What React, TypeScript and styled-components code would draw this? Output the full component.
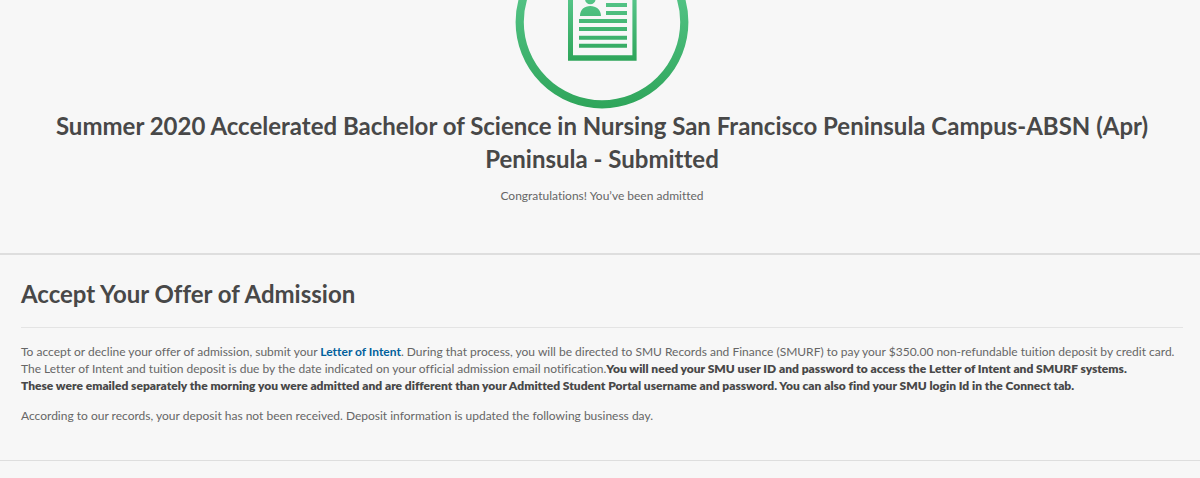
import React from "react";
import styled, { createGlobalStyle } from "styled-components";

const GlobalStyle = createGlobalStyle`
  body {
    margin: 0;
    background: #f7f7f7;
    color: #666666;
    font-family: Lato, "Liberation Sans", sans-serif;
    font-size: 12px;
    font-variant-ligatures: none;
    line-height: 17px;
  }
`;

const Hero = styled.header`
  display: flex;
  flex-direction: column;
  align-items: center;
  padding: 0 17px 49px 21px;
  border-bottom: 2px solid #dedede;
  text-align: center;
`;

const Badge = styled.svg`
  display: block;
  width: 174px;
  height: 109px;
`;

const Title = styled.h1`
  margin: 0;
  color: #484848;
  font-size: 24px;
  font-weight: 700;
  line-height: 33px;
`;

const Status = styled.p`
  margin: 12px 0 0;
`;

const Offer = styled.section`
  padding: 22px 17px 36px 21px;
  border-bottom: 1px solid #dedede;
`;

const SectionTitle = styled.h2`
  margin: 0 0 15px;
  padding-bottom: 17px;
  border-bottom: 1px solid #e4e4e4;
  color: #484848;
  font-size: 24px;
  font-weight: 700;
  line-height: 33px;
`;

const Paragraph = styled.p`
  margin: 0 0 13px;

  &:last-child {
    margin-bottom: 0;
  }
`;

const Strong = styled.strong`
  color: #484848;
  font-weight: 800;
`;

const TextLink = styled.a`
  color: #00609c;
  font-weight: 700;
  text-decoration: none;
`;

function ApplicationBadge() {
  return (
    <Badge viewBox="0 0 174 109" aria-hidden="true">
      <defs>
        <linearGradient id="ring" gradientUnits="userSpaceOnUse" x1="0" y1="-65" x2="0" y2="109">
          <stop offset="0" stopColor="#66d29b" />
          <stop offset="1" stopColor="#2ea55a" />
        </linearGradient>
        <linearGradient id="sheet" gradientUnits="userSpaceOnUse" x1="0" y1="-27" x2="0" y2="61">
          <stop offset="0" stopColor="#66d29b" />
          <stop offset="1" stopColor="#2ea55a" />
        </linearGradient>
      </defs>
      <circle cx="87" cy="22" r="82.3" fill="none" stroke="url(#ring)" strokeWidth="8.2" />
      <path
        fill="url(#sheet)"
        fillRule="evenodd"
        d="M53-27H121.6V60.7H53ZM58-22V55.3H117.4V-22Z"
      />
      <circle cx="75.3" cy="-1" r="5.3" fill="url(#sheet)" />
      <path
        fill="url(#sheet)"
        d="M65 16C65 9.500 69.500 6 75.300 6S86 9.500 86 16ZM91 3H112V7H91ZM91 11H112V15H91ZM64 19H112V23H64ZM64 27H112V31H64ZM64 35.700H112V39.700H64ZM64 43.700H112V47.700H64Z"
      />
    </Badge>
  );
}

export default function App() {
  return (
    <>
      <GlobalStyle />
      <main>
        <Hero>
          <ApplicationBadge />
          <Title>
            Summer 2020 Accelerated Bachelor of Science in Nursing San Francisco Peninsula
            Campus-ABSN (Apr) Peninsula - Submitted
          </Title>
          <Status>Congratulations! You’ve been admitted</Status>
        </Hero>
        <Offer>
          <SectionTitle>Accept Your Offer of Admission</SectionTitle>
          <Paragraph>
            To accept or decline your offer of admission, submit your{" "}
            <TextLink href="#letter-of-intent">Letter of Intent</TextLink>. During that process, you
            will be directed to SMU Records and Finance (SMURF) to pay your $350.00 non-refundable
            tuition deposit by credit card.
            <br />
            The Letter of Intent and tuition deposit is due by the date indicated on your official
            admission email notification.
            <Strong>
              You will need your SMU user ID and password to access the Letter of Intent and SMURF
              systems.
              <br />
              These were emailed separately the morning you were admitted and are different than
              your Admitted Student Portal username and password. You can also find your SMU login
              Id in the Connect tab.
            </Strong>
          </Paragraph>
          <Paragraph>
            According to our records, your deposit has not been received. Deposit information is
            updated the following business day.
          </Paragraph>
        </Offer>
      </main>
    </>
  );
}
